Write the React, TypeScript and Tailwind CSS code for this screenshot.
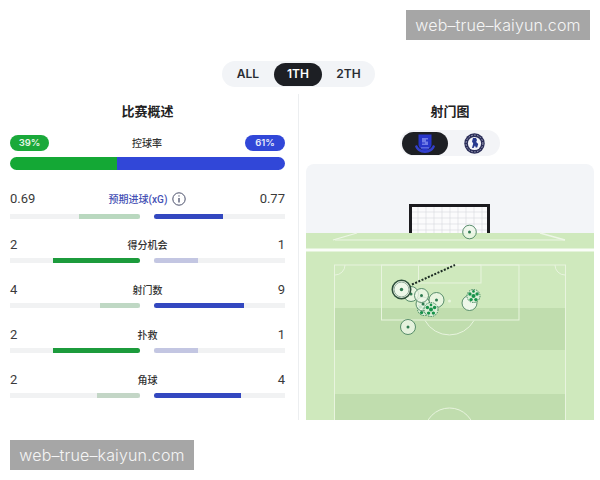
// App.tsx
const fontStack = "font-['Inter','Noto_Sans_CJK_SC',sans-serif]";
const numberFont = "font-['Roboto','Noto_Sans_CJK_SC',sans-serif]";

type Stat = {
  label: string;
  left: string;
  right: string;
  leftW: string;
  rightW: string;
  leftColor: string;
  rightColor: string;
};

const stats: Stat[] = [
  { label: "得分机会", left: "2", right: "1", leftW: "w-[87px]", rightW: "w-[44px]", leftColor: "bg-[#1c9b3c]", rightColor: "bg-[#c3c6e2]" },
  { label: "射门数", left: "4", right: "9", leftW: "w-[40px]", rightW: "w-[90px]", leftColor: "bg-[#bfd8c4]", rightColor: "bg-[#3348c0]" },
  { label: "扑救", left: "2", right: "1", leftW: "w-[87px]", rightW: "w-[44px]", leftColor: "bg-[#1c9b3c]", rightColor: "bg-[#c3c6e2]" },
  { label: "角球", left: "2", right: "4", leftW: "w-[43px]", rightW: "w-[87px]", leftColor: "bg-[#c3d6c6]", rightColor: "bg-[#3348c0]" },
];

const StatBars = ({ s, className }: { s: Stat; className: string }) => (
  <div className={`flex justify-between ${className}`}>
    <div className="w-[130px] h-[5px] bg-[#f1f2f3] flex justify-end">
      <div className={`${s.leftW} h-full rounded-r-sm ${s.leftColor}`} />
    </div>
    <div className="w-[131px] h-[5px] bg-[#f1f2f3]">
      <div className={`${s.rightW} h-full rounded-l-sm ${s.rightColor}`} />
    </div>
  </div>
);

const StatRow = ({ s }: { s: Stat }) => (
  <div className="h-[45px]">
    <div className={`flex justify-between items-center h-[18px] text-[13px] text-[#3a3a3a] ${numberFont}`}>
      <span>{s.left}</span>
      <span className="text-[10px] font-medium text-[#333]">{s.label}</span>
      <span>{s.right}</span>
    </div>
    <StatBars s={s} className="mt-[4px]" />
  </div>
);

const Everton = () => (
  <svg width="22" height="21" viewBox="0 0 22 21">
    <path d="M1 13c1 4 5 7 10 7s9-3 10-7l-2-1c-1 3-4 5-8 5s-7-2-8-5z" fill="#3340cc" />
    <path d="M4.500 1.500h13v10c0 3-2.500 5-6.500 6.500-4-1.500-6.500-3.500-6.500-6.500z" fill="#2735c9" />
    <path d="M8 5h6v1.500h-2v2h2v3.500H8v-1.500h3V9.500H8z" fill="#6f7be6" />
    <path d="M7 14h8v1.500H7z" fill="#5a66dc" />
  </svg>
);

const Chelsea = () => (
  <svg width="21" height="21" viewBox="0 0 21 21">
    <circle cx="10.500" cy="10.500" r="10.200" fill="#2a2d58" />
    <circle cx="10.500" cy="10.500" r="8.400" fill="none" stroke="#c9cbe0" strokeWidth="0.800" strokeDasharray="1.500 1.500" />
    <circle cx="10.500" cy="10.500" r="6.600" fill="#f4f5fa" />
    <path d="M9 5h3l1 2-.8 2 2 2-1 3.500h-1.500l-.7-2-1.500 2.500H8l1.200-4.500L8 8.500z" fill="#27398f" />
  </svg>
);

const Shot = ({ x, y, r }: { x: number; y: number; r: number }) => (
  <g>
    <circle cx={x} cy={y} r={r} fill="#edf7e9" fillOpacity="0.8" stroke="#4a8260" strokeWidth="0.900" />
    <circle cx={x} cy={y} r="1.500" fill="#2f7a50" />
  </g>
);

const Ball = ({ x, y, r }: { x: number; y: number; r: number }) => (
  <g>
    <circle cx={x} cy={y} r={r} fill="#d9efd6" stroke="#2f7a50" strokeWidth="0.900" strokeDasharray="1.500 1" />
    <circle cx={x} cy={y} r="2" fill="#17924a" />
    <circle cx={x - 3.600} cy={y - 2} r="1.700" fill="#17924a" />
    <circle cx={x + 3.600} cy={y - 2} r="1.700" fill="#17924a" />
    <circle cx={x - 2.400} cy={y + 3.600} r="1.700" fill="#17924a" />
    <circle cx={x + 2.400} cy={y + 3.600} r="1.700" fill="#17924a" />
    <circle cx={x} cy={y - 4.600} r="1.300" fill="#17924a" />
  </g>
);

// pitch drawing, viewBox uses page coordinates so it is easy to read off the picture
const Pitch = () => (
  <svg width="288" height="256" viewBox="306 164 288 256" className="block">
    <rect x="306" y="164" width="288" height="256" fill="#f3f5f8" />
    {/* goal */}
    <rect x="410" y="205" width="79" height="30" fill="#fbfbfc" />
    <g stroke="#d6d8dd" strokeWidth="0.600">
      {[418, 426, 434, 442, 450, 458, 466, 474, 482].map((x) => (
        <line key={x} x1={x} y1="206" x2={x} y2="233" />
      ))}
      {[212, 218, 224, 230].map((y) => (
        <line key={y} x1="410" y1={y} x2="489" y2={y} />
      ))}
    </g>
    <path d="M410.500 233V205.500H488.500V233" fill="none" stroke="#1b1b1f" strokeWidth="3" />
    {/* far strip */}
    <rect x="306" y="233" width="288" height="187" fill="#cfe9bd" />
    <path d="M333 240L357 233M565 240L540 233" stroke="#edf6e6" strokeWidth="1.300" fill="none" />
    <line x1="335" y1="240" x2="565" y2="240" stroke="#edf6e6" strokeWidth="1" />
    <rect x="306" y="248.500" width="288" height="3" fill="#fafdf8" />
    {/* dark bands */}
    <rect x="335" y="308" width="230" height="42" fill="#c0ddae" />
    <rect x="335" y="394" width="230" height="26" fill="#c0ddae" />
    {/* lines */}
    <g fill="none" stroke="#e8f4de" strokeWidth="1">
      <rect x="334.500" y="265" width="231" height="170" />
      <rect x="381.500" y="265" width="137.500" height="55" />
      <rect x="418.500" y="265" width="62.500" height="18" />
      <path d="M425 320.500A28 28 0 0 0 474 320.500" />
      <circle cx="449.500" cy="433" r="25" />
      <path d="M335 275A10 10 0 0 0 345 265M565 275A10 10 0 0 1 555 265" />
    </g>
    <circle cx="449.500" cy="301" r="1.500" fill="#e8f4de" />
    {/* shots */}
    <Shot x={469.500} y={232} r={6.800} />
    <Ball x={424} y={309} r={6.500} />
    <Shot x={423} y={304} r={7} />
    <Shot x={411} y={294} r={7.500} />
    <Shot x={421.500} y={295.500} r={7} />
    <Shot x={436.500} y={300} r={7.500} />
    <Ball x={431} y={309.500} r={7} />
    <circle cx="469.500" cy="303" r="7.500" fill="#edf7e9" stroke="#4a8260" strokeWidth="0.900" />
    <Ball x={473.500} y={296} r={6.500} />
    <Shot x={408} y={327} r={7.500} />
    <line x1="412" y1="284.500" x2="455" y2="265" stroke="#1b2a22" strokeWidth="2" strokeDasharray="2 1.500" />
    <circle cx="401.500" cy="289.500" r="9.200" fill="#edf7e9" stroke="#2d4f3b" strokeWidth="1.600" />
    <circle cx="401.500" cy="289.500" r="7.400" fill="none" stroke="#7f9c8a" strokeWidth="0.800" />
    <circle cx="401.500" cy="289.500" r="1.700" fill="#2f7a50" />
  </svg>
);

const Watermark = ({ className }: { className: string }) => (
  <div className={`absolute w-[184px] h-[30px] bg-[#a6a6a6] flex items-center justify-center text-[16px] font-light tracking-[0.15px] text-[#f5f5f5] font-['Inter',sans-serif] ${className}`}>
    web–true–kaiyun.com
  </div>
);

export default function App() {
  return (
    <div className={`relative w-[600px] h-[480px] bg-white overflow-hidden ${fontStack}`}>
      <div className="h-[420px] overflow-hidden pt-[61px]">
        {/* period tabs */}
        <div className="pl-[222px]">
          <div className="flex items-center w-[153px] h-[26px] bg-[#f2f4f7] rounded-full text-[12px] font-semibold text-[#2a2d33]">
            <span className="w-[52px] text-center">ALL</span>
            <span className="w-[48px] h-[23px] bg-[#1d1f24] text-white rounded-full flex items-center justify-center">1TH</span>
            <span className="flex-1 text-center">2TH</span>
          </div>
        </div>

        <div className="grid grid-cols-[299px_301px] mt-[7px]">
          {/* left column */}
          <div className="border-r border-[#eceef0] pl-[10px] pr-[13px] h-[326px] overflow-hidden">
            <h3 className="text-[13px] font-bold text-center text-[#222] h-[20px] leading-[20px] mt-[7px]">比赛概述</h3>
            <div className="flex justify-between items-center mt-[14px] h-[16px]">
              <span className="w-[39px] h-[16px] rounded-full bg-[#1aa93a] text-[#e6f5e6] text-[9.500px] font-semibold flex items-center justify-center">39%</span>
              <span className="text-[10px] font-medium text-[#333]">控球率</span>
              <span className="w-[40px] h-[16px] rounded-full bg-[#3147d8] text-[#e6e9fb] text-[9.500px] font-semibold flex items-center justify-center">61%</span>
            </div>
            <div className="flex h-[13px] rounded-full overflow-hidden mt-[6px]">
              <div className="w-[107px] bg-[#14a835]" />
              <div className="flex-1 bg-[#3147d8]" />
            </div>

            <div className="h-[45px] mt-[21px]">
              <div className={`flex justify-between items-center h-[16px] text-[13px] text-[#3a3a3a] ${numberFont}`}>
                <span>0.69</span>
                <span className="flex items-center gap-[5px] text-[10px] font-medium text-[#4450b4]">
                  预期进球(xG)
                  <svg width="14" height="14" viewBox="0 0 14 14" fill="none" stroke="#4a4f6a" strokeWidth="1">
                    <circle cx="7" cy="7" r="6.200" />
                    <line x1="7" y1="6" x2="7" y2="10.500" strokeWidth="1.300" />
                    <circle cx="7" cy="3.900" r="0.700" fill="#4a4f6a" stroke="none" />
                  </svg>
                </span>
                <span>0.77</span>
              </div>
              <StatBars
                className="mt-[7px]"
                s={{
                  label: "",
                  left: "",
                  right: "",
                  leftW: "w-[61px]",
                  rightW: "w-[69px]",
                  leftColor: "bg-[#b9d8bf]",
                  rightColor: "bg-[#3348c0]",
                }}
              />
            </div>

            {stats.map((s) => (
              <StatRow key={s.label + s.left} s={s} />
            ))}

            <div className={`flex justify-between items-center h-[18px] text-[13px] text-[#3a3a3a] ${numberFont}`}>
              <span>2</span>
              <span className="text-[10px] font-medium text-[#333]">犯规</span>
              <span>1</span>
            </div>
          </div>

          {/* right column */}
          <div className="pl-[7px] pr-[6px]">
            <h3 className="text-[13px] font-bold text-center text-[#222] h-[20px] leading-[20px] mt-[7px]">射门图</h3>
            <div className="flex justify-center mt-[9px]">
              <div className="flex items-center w-[100px] h-[26px] bg-[#f3f4f7] rounded-full px-[2px]">
                <span className="w-[46px] h-[23px] bg-[#1d1f24] rounded-full flex items-center justify-center">
                  <Everton />
                </span>
                <span className="ml-[16px]">
                  <Chelsea />
                </span>
              </div>
            </div>
            <div className="mt-[8px] rounded-t-lg overflow-hidden">
              <Pitch />
            </div>
          </div>
        </div>
      </div>

      <Watermark className="top-[10px] left-[406px]" />
      <Watermark className="top-[440px] left-[10px]" />
    </div>
  );
}
